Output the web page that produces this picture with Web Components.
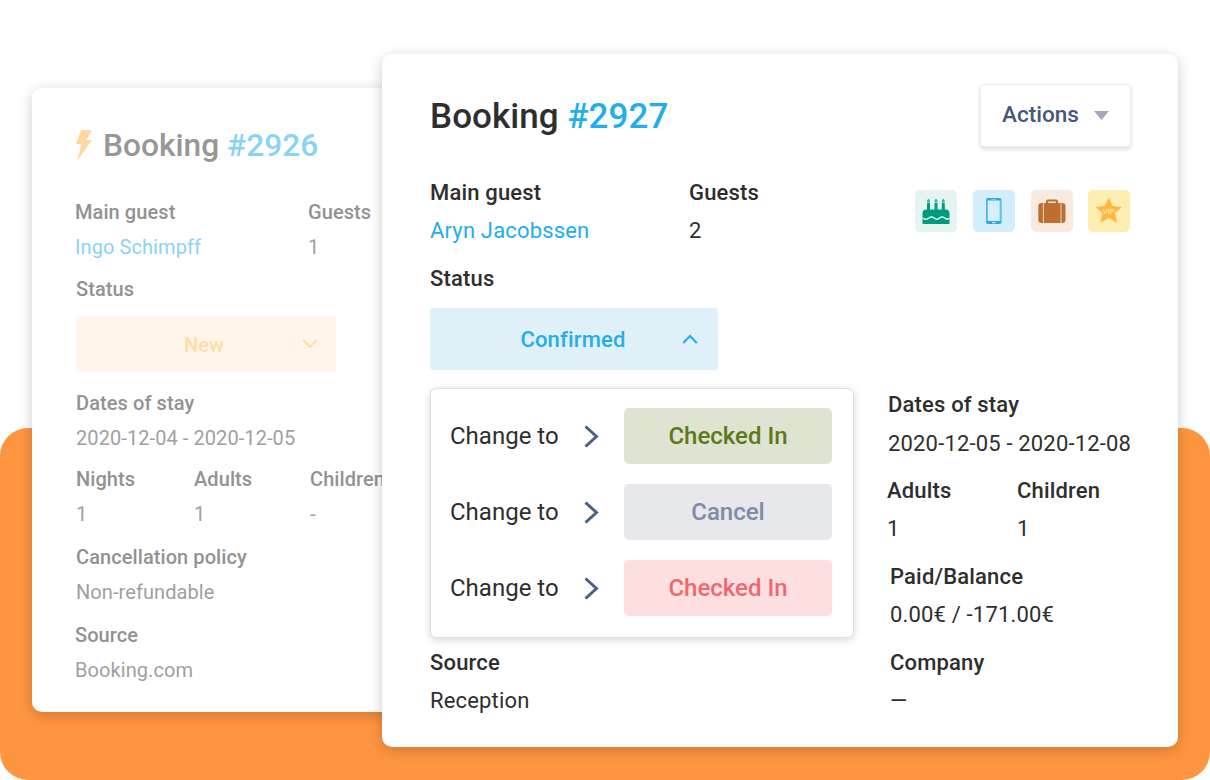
<!DOCTYPE html>
<html lang="en"><head><meta charset="utf-8"><title>Booking</title>
<style>
html,body{margin:0;padding:0;background:#fff;overflow:hidden}
body{font-family:Roboto,"Liberation Sans",sans-serif;width:1210px;height:780px}
</style></head><body>
<booking-stage>
  <booking-card slot="back" class="back" variant="back">
    <back-booking></back-booking>
  </booking-card>
  <booking-card slot="front" variant="front">
    <front-booking></front-booking>
  </booking-card>
</booking-stage>
<script>
function el(name, html){
  customElements.define(name, class extends HTMLElement{
    constructor(){super();this.attachShadow({mode:'open'}).innerHTML=typeof html==='function'?html(this):html;}
    connectedCallback(){
      if(typeof html==='function'&&!this._d){this._d=1;this.shadowRoot.innerHTML=html(this);}
    }
  });
}
el('booking-stage',`<style>
:host{display:block;position:relative;width:1210px;height:780px;overflow:hidden;background:#fff}
.orange{position:absolute;left:0;top:428px;width:1210px;height:352px;background:#FE9540;border-radius:28px}
.b{position:absolute;left:32px;top:88px;width:400px;height:624px}
.f{position:absolute;left:382px;top:54px;width:796px;height:693px}
</style><div class="orange"></div>
<div class="b"><slot name="back"></slot></div>
<div class="f"><slot name="front"></slot></div>`);
el('booking-card',`<style>
:host{display:block;width:100%;height:100%;background:#fff;border-radius:10px;box-sizing:border-box;box-shadow:0 3px 14px rgba(0,0,0,.2);overflow:hidden}
</style><slot></slot>`);
el('info-field',h=>{
  const c=h.getAttribute('gap')||'14';
  return `<style>
:host{display:flex;flex-direction:column;gap:${c}px;line-height:24px;white-space:nowrap}
.l{font-weight:500;color:var(--label,#2e2e2e)}
.v{color:var(--value,#2e2e2e)}
</style><div class="l">${h.getAttribute('label')}</div><div class="v"><slot></slot></div>`;
});
el('status-select',h=>`<style>
:host{display:flex;align-items:center;justify-content:center;position:relative;box-sizing:border-box;border-radius:3px;font-weight:500;padding-right:${h.getAttribute('pr')||0}px;padding-top:${h.getAttribute('pt')||0}px}
svg{position:absolute;top:50%;transform:translateY(-50%)}
</style><slot></slot><svg style="right:${h.getAttribute('ir')}px" width="16" height="10" viewBox="0 0 16 10" fill="none" stroke="currentColor" stroke-width="2.200"><path d="${h.getAttribute('dir')==='up'?'M1.200 9 8 2l6.800 7':'M1.200 1 8 8l6.800-7'}"/></svg>`);
el('change-row',h=>`<style>
:host{display:flex;align-items:center;font-size:24px;letter-spacing:0;color:#2e2e2e;height:56px}
.t{width:134px;white-space:nowrap}
svg{flex:none}
.p{width:208px;height:56px;margin-left:auto;display:flex;align-items:center;justify-content:center;border-radius:5px;font-weight:500;background:${h.getAttribute('bg')};color:${h.getAttribute('fg')}}
</style><span class="t">Change to</span><svg width="15" height="23" viewBox="0 0 15 23" fill="none" stroke="#4A5F83" stroke-width="3"><path d="M1.500 1.500 12.500 11.500 1.500 21.500"/></svg><div class="p"><slot></slot></div>`);
el('icon-tile',h=>`<style>
:host{display:block;width:42px;height:42px;border-radius:5px;background:${h.getAttribute('bg')}}
svg{display:block}
</style><svg width="42" height="42" viewBox="0 0 42 42"><slot></slot></svg>`);
el('actions-button',`<style>
:host{display:flex;align-items:center;box-sizing:border-box;width:151px;height:63px;padding-left:21px;border:1px solid #ececec;border-radius:4px;background:#fff;box-shadow:0 2px 4px rgba(0,0,0,.14);font-size:22.500px;letter-spacing:0;font-weight:500;color:#45587A}
span{margin-top:-3px}
svg{margin-left:15.500px}
</style><span>Actions</span><svg width="15" height="9" viewBox="0 0 15 9"><path d="M0 0h15L7.500 9z" fill="#A1A9B9"/></svg>`);
el('front-booking',`<style>
:host{display:block;padding:30px 47px 34px 48px;font-size:22px;letter-spacing:.17px;color:#2e2e2e;box-sizing:border-box;height:100%}
.head{display:flex;justify-content:space-between;align-items:center;height:63px}
h1{margin:2px 0 0;font-size:35px;font-weight:500;line-height:40px;letter-spacing:.05px}
h1 span{color:#22AEEB}
.top{display:flex;margin-top:34px}
.top info-field:first-child{width:259px}
.tiles{margin-left:auto;margin-right:1px;display:flex;gap:16px;margin-top:9px;height:42px}
#t4{margin-left:-1px;margin-right:0}
.link{color:#22AEEB}
.status{margin-top:24px}
.lab{font-weight:500;line-height:24px}
status-select{width:288px;height:62px;margin-top:17px;background:#E0F0F9;color:#22AEEB}
.lower{display:grid;grid-template-columns:458px 1fr;margin-top:18px}
.pop{width:424px;height:250px;box-sizing:border-box;border:1px solid #dedede;border-radius:6px;background:#fff;box-shadow:0 2px 8px rgba(0,0,0,.16);padding:19px 21px 19px 19px;display:flex;flex-direction:column;gap:20px}
.src{margin-top:13px}
.right{display:flex;flex-direction:column;padding-top:5px}
.two{display:flex;margin:23px 0 24px -1px}
.two info-field:first-child{width:130px}
.pad{margin-left:2px}
.dash{display:block}
</style>
<div class="head"><h1>Booking <span>#2927</span></h1><actions-button></actions-button></div>
<div class="top">
  <info-field label="Main guest"><span class="link">Aryn Jacobssen</span></info-field>
  <info-field label="Guests">2</info-field>
  <div class="tiles">
    <icon-tile bg="#E5F4F0" id="t1"></icon-tile>
    <icon-tile bg="#D2EEFB" id="t2"></icon-tile>
    <icon-tile bg="#F6EAE1" id="t3"></icon-tile>
    <icon-tile bg="#FEEDB0" id="t4"></icon-tile>
  </div>
</div>
<div class="status"><div class="lab">Status</div>
  <status-select dir="up" ir="20" pr="2">Confirmed</status-select></div>
<div class="lower">
  <div>
    <div class="pop">
      <change-row bg="#DFE3D2" fg="#5C7A1C">Checked In</change-row>
      <change-row bg="#E6E8EC" fg="#7E8CA8">Cancel</change-row>
      <change-row bg="#FDDFE0" fg="#EE696E">Checked In</change-row>
    </div>
    <info-field class="src" label="Source">Reception</info-field>
  </div>
  <div class="right">
    <info-field gap="15" label="Dates of stay">2020-12-05 - 2020-12-08</info-field>
    <div class="two"><info-field label="Adults">1</info-field><info-field label="Children">1</info-field></div>
    <info-field class="pad" label="Paid/Balance">0.00€ / -171.00€</info-field>
    <info-field class="pad" style="margin-top:24px" label="Company"><span class="dash">—</span></info-field>
  </div>
</div>`);
el('back-booking',`<style>
:host{display:block;padding:42px 0 0 43px;font-size:20px;letter-spacing:.08px;color:#999;--label:#929292;--value:#a0a0a0;height:100%;box-sizing:border-box}
.head{display:flex;align-items:center;height:30px}
h1{margin:2px 0 0;font-size:31.700px;letter-spacing:0;font-weight:500;line-height:30px;color:#979797;white-space:nowrap}
h1 span{color:#8BD3F4}
svg{margin:0 11px 0 1px;flex:none}
.link{color:#8BD3F4}
.top{display:flex;margin-top:38px}
.top info-field:first-child{width:233px}
.col{padding-left:1px}
.lab{font-weight:500;line-height:24px;color:#929292}
info-field{line-height:24px}
.gapped{margin-top:18px}
status-select{width:260px;height:56px;margin-top:15px;background:#FFF5EB;color:#FFDCA8}
.three{display:flex;margin-top:17px}
.three info-field{width:116px}
.three info-field:first-child{width:118px}
</style>
<div class="head"><svg width="16" height="31" viewBox="0 0 16 31"><path d="M5 0h11l-5.500 10H16L1 31l4.500-17H0z" fill="#FFD79F"/></svg><h1>Booking <span>#2926</span></h1></div>
<div class="top" style="margin-top:40px">
  <info-field gap="11" label="Main guest"><span class="link">Ingo Schimpff</span></info-field>
  <info-field gap="11" label="Guests">1</info-field>
</div>
<div class="col">
  <div class="gapped lab">Status</div>
  <status-select dir="down" ir="18" pr="4" pt="2">New</status-select>
  <info-field gap="11" style="margin-top:19px" label="Dates of stay">2020-12-04 - 2020-12-05</info-field>
  <div class="three">
    <info-field gap="11" label="Nights">1</info-field>
    <info-field gap="11" label="Adults">1</info-field>
    <info-field gap="11" label="Children">-</info-field>
  </div>
  <info-field gap="11" style="margin-top:19px" label="Cancellation policy">Non-refundable</info-field>
</div>
<info-field gap="11" style="margin-top:19px" label="Source">Booking.com</info-field>`);
const tiles={
t1:`<svg xmlns="http://www.w3.org/2000/svg" width="42" height="42" viewBox="0 0 42 42" style="display:block"><g fill="#029B7C"><rect x="12" y="13" width="3" height="8"/><rect x="19.500" y="13" width="3" height="8"/><rect x="26.800" y="13" width="3" height="8"/><path d="M7.500 23.500a4 4 0 0 1 4-4h19a4 4 0 0 1 4 4V34h-27z"/></g><path d="M7.500 28c2.300 1.700 4.300 1.700 6.500 0 1.800-1.500 3.400-1.500 5.200 0 1.800 1.500 3.700 1.500 5.400 0 1.800-1.500 3.400-1.500 5.200 0 1.600 1.500 3.200 1.500 4.700 0" fill="none" stroke="#E5F4F0" stroke-width="1.500"/><g fill="#3FB59C"><path d="M13.500 8.500c1.200 1.300 1.600 2.200 1.600 3 0 .7-.7 1.200-1.600 1.200s-1.600-.5-1.600-1.200c0-.8.400-1.700 1.600-3z"/><path d="M21 8.500c1.200 1.300 1.600 2.200 1.600 3 0 .7-.7 1.200-1.600 1.200s-1.600-.5-1.600-1.200c0-.8.400-1.700 1.600-3z"/><path d="M28.300 8.500c1.200 1.300 1.600 2.200 1.600 3 0 .7-.7 1.200-1.600 1.200s-1.600-.5-1.600-1.200c0-.8.400-1.700 1.600-3z"/></g></svg>`,
t2:`<svg xmlns="http://www.w3.org/2000/svg" width="42" height="42" viewBox="0 0 42 42" style="display:block"><rect x="13" y="8" width="15.500" height="26" rx="2" fill="#2BA8EC"/><rect x="14.500" y="10.500" width="12.500" height="20.500" fill="#D8EEFA"/><rect x="13.500" y="10.500" width="1.400" height="20.500" fill="#62C3F5"/><rect x="26.600" y="10.500" width="1.400" height="20.500" fill="#62C3F5"/><rect x="19" y="32" width="3.500" height="1.200" fill="#D8EEFA"/><rect x="18.500" y="9" width="4.500" height=".8" fill="#8AD0F5"/></svg>`,
t3:`<svg xmlns="http://www.w3.org/2000/svg" width="42" height="42" viewBox="0 0 42 42" style="display:block"><path fill="#BE6F30" fill-rule="evenodd" d="M15 13v-2a1.500 1.500 0 0 1 1.500-1.500h9A1.500 1.500 0 0 1 27 11v2h-2.200v-1.500h-7.600V13z"/><path fill="#BE6F30" d="M10.500 13h1.400v20h-1.400A3.300 3.300 0 0 1 7.300 29.700v-13.400A3.300 3.300 0 0 1 10.500 13zM12.700 13h16.900v20H12.700zM30.400 13h.8a3.300 3.300 0 0 1 3.300 3.300v13.400a3.300 3.300 0 0 1-3.300 3.300h-.8z"/></svg>`,
t4:`<svg xmlns="http://www.w3.org/2000/svg" width="42" height="42" viewBox="0 0 42 42" style="display:block"><path fill="#FFB63C" d="M20.700 7.500l3.900 8.500 9.200 1-6.900 6.300 2.300 9.500-8.500-5-8.500 5 2.300-9.500-6.900-6.300 9.200-1z"/><text x="20.700" y="24" text-anchor="middle" font-family="Roboto,sans-serif" font-size="7.500" font-weight="500" letter-spacing="0" fill="#FFE9B4">VIP</text></svg>`};
const fb=document.querySelector('front-booking').shadowRoot;
for(const k in tiles){const t=fb.getElementById(k);t.shadowRoot.innerHTML=t.shadowRoot.innerHTML.replace(/<svg[\s\S]*<\/svg>/,'')+tiles[k];}
</script>
</body></html>
